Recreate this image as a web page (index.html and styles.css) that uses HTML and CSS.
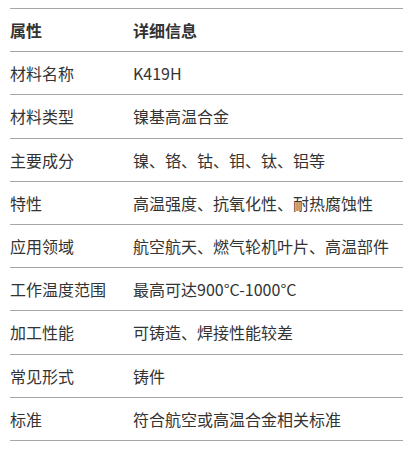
FILE: index.html
```html
<!DOCTYPE html>
<html lang="zh">
<head>
<meta charset="utf-8">
<link rel="stylesheet" href="styles.css">
</head>
<body>
<table class="spec">
  <thead>
    <tr><th class="key">属性</th><th>详细信息</th></tr>
  </thead>
  <tbody>
    <tr><td class="key">材料名称</td><td>K419H</td></tr>
    <tr><td class="key">材料类型</td><td>镍基高温合金</td></tr>
    <tr><td class="key">主要成分</td><td>镍、铬、钴、钼、钛、铝等</td></tr>
    <tr><td class="key">特性</td><td>高温强度、抗氧化性、耐热腐蚀性</td></tr>
    <tr><td class="key">应用领域</td><td>航空航天、燃气轮机叶片、高温部件</td></tr>
    <tr><td class="key">工作温度范围</td><td>最高可达900°C-1000°C</td></tr>
    <tr><td class="key">加工性能</td><td>可铸造、焊接性能较差</td></tr>
    <tr><td class="key">常见形式</td><td>铸件</td></tr>
    <tr><td class="key">标准</td><td>符合航空或高温合金相关标准</td></tr>
  </tbody>
</table>
</body>
</html>
```
FILE: styles.css
```css
html, body {
  margin: 0;
  background: #ffffff;
}
body {
  padding: 8px 0 0 10px;
  font-family: "Noto Sans CJK SC", "Noto Sans", sans-serif;
  font-size: 16px;
  color: #333333;
}
.spec {
  width: 393px;
  border-collapse: collapse;
}
.spec th,
.spec td {
  text-align: left;
  padding: 9px 0;
  line-height: 24.2px;
  border-top: 1px solid #a6a6a6;
  border-bottom: 1px solid #a6a6a6;
  vertical-align: middle;
}
.spec th {
  font-weight: bold;
  color: #333333;
}
.spec .key {
  width: 123px;
}
```
